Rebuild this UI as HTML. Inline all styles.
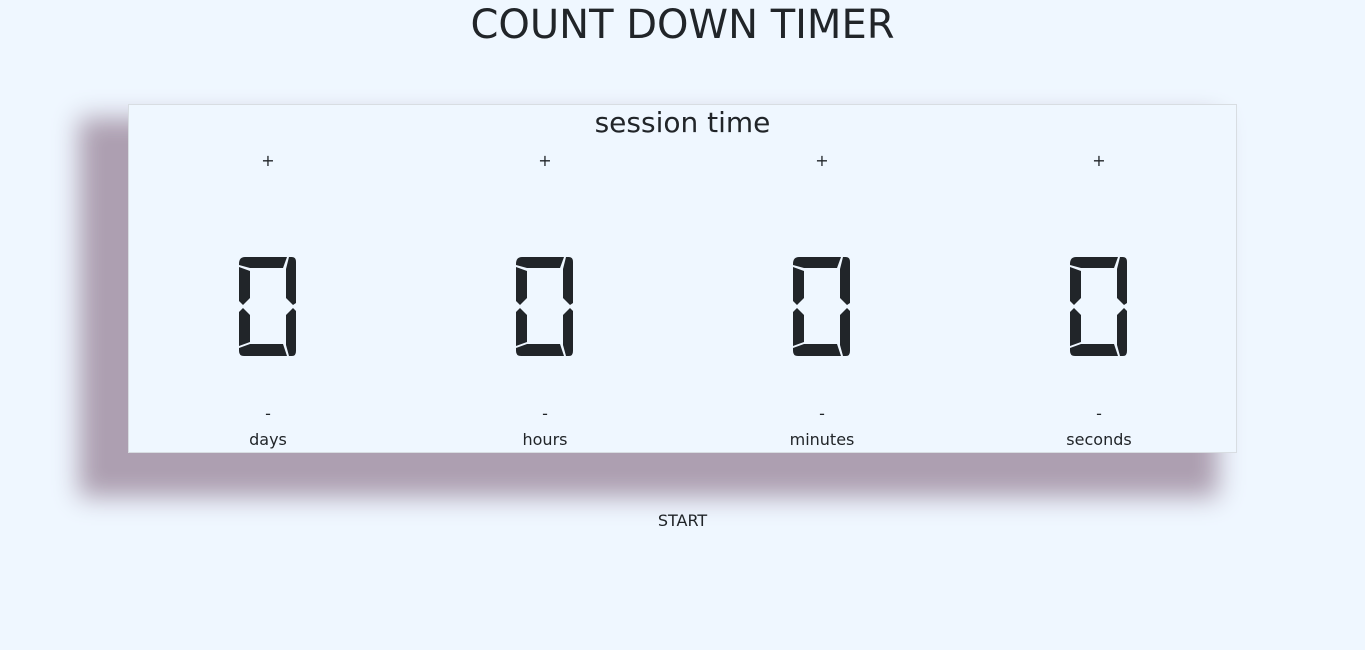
<!DOCTYPE html>
<html><head><style>
body{margin:0;width:1365px;height:650px;background:#eff7ff;font-family:"DejaVu Sans","Liberation Sans",sans-serif;color:#212529;position:relative;overflow:hidden}
h1{position:absolute;top:0;left:0;width:1365px;text-align:center;margin:0;font-weight:400;font-size:40px;line-height:50px}
.box{position:absolute;left:128px;top:104px;width:1107px;height:347px;border:1px solid #d8dde2;background:#eff7ff;box-shadow:-34px 29px 24px 15px #ad9fb1}
.st{position:absolute;top:0;left:0;width:100%;text-align:center;font-size:28px;line-height:36px}
.col{position:absolute;top:0;width:120px;height:347px;text-align:center;font-size:16px}
.p{position:absolute;top:46px;width:100%;line-height:20px}
.m{position:absolute;top:299px;width:100%;line-height:20px}
.l{position:absolute;top:325px;width:100%;line-height:20px}
svg{position:absolute;top:152px;left:31px}
.start{position:absolute;top:511px;left:0;width:1365px;text-align:center;font-size:16px;line-height:20px}
</style></head><body>
<h1>COUNT DOWN TIMER</h1>
<div class="box">
<div class="st">session time</div>
<div class="col" style="left:79px"><div class="p">+</div><svg width="58" height="100"><use href="#d"/></svg><div class="m">-</div><div class="l">days</div></div>
<div class="col" style="left:356px"><div class="p">+</div><svg width="58" height="100"><use href="#d"/></svg><div class="m">-</div><div class="l">hours</div></div>
<div class="col" style="left:633px"><div class="p">+</div><svg width="58" height="100"><use href="#d"/></svg><div class="m">-</div><div class="l">minutes</div></div>
<div class="col" style="left:910px"><div class="p">+</div><svg width="58" height="100"><use href="#d"/></svg><div class="m">-</div><div class="l">seconds</div></div>
</div>
<svg width="0" height="0" style="position:absolute;top:0;left:0"><defs><g id="d" fill="#212529">
<path d="M0,7 Q0,0 6,0 L48,0 L44,11 L11,11 L0,8Z"/>
<path d="M0,10 L11,14 L11,41 L4,48 L0,44Z"/>
<path d="M50,0 L53,0 Q57,0 57,5 L57,46 L54,48 L47,41 L47,12Z"/>
<path d="M0,55 L4,51 L11,58 L11,85 L0,89Z"/>
<path d="M47,58 L54,51 L57,54 L57,94 Q57,99 53,99 L50,99 L47,88Z"/>
<path d="M0,91 L11,87 L44,87 L48,99 L5,99 Q0,99 0,94Z"/>
</g></defs></svg>
<div class="start">START</div>
</body></html>
